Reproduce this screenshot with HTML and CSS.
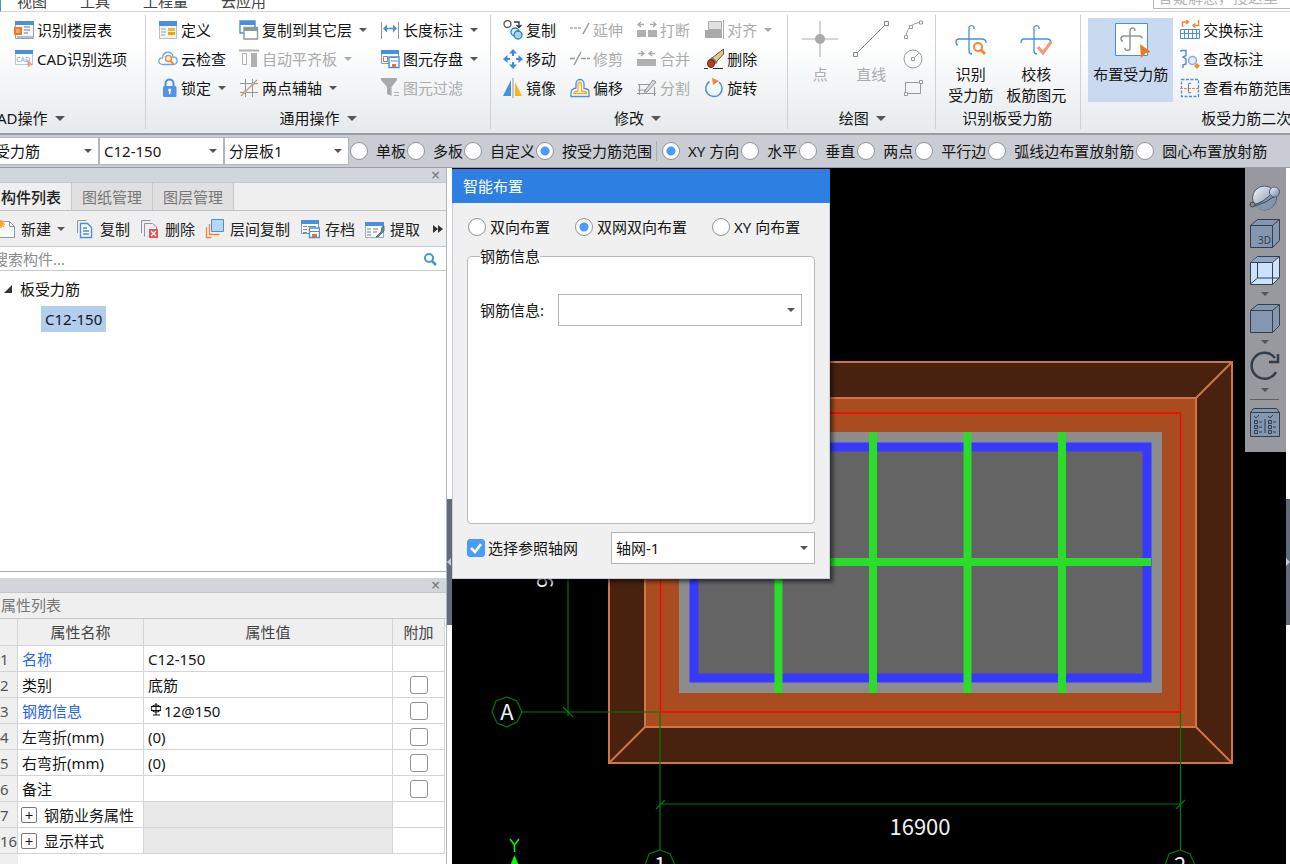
FILE: index.html
```
<!DOCTYPE html>
<html lang="zh-CN">
<head>
<meta charset="utf-8">
<title>板受力筋</title>
<link rel="stylesheet" href="styles.css">
</head>
<body>
<svg class="sprite" aria-hidden="true">
  <defs>
    <linearGradient id="ball" x1="0" y1="0" x2="1" y2="1"><stop offset="0" stop-color="#f2f6fa"/><stop offset="1" stop-color="#6f84a0"/></linearGradient>
  </defs>
  <symbol id="floor-table" viewBox="0 0 20 20"><path d="M1.500 1.500h18v17h-18z" fill="#f4f6f8" stroke="#9aa3ab"/><path d="M1 1h19v4H1z" fill="#4a8fdc"/><path d="M3 17h16" stroke="#4a8fdc"/><path d="M0 7h8v8H0z" fill="#f07a22"/><path d="M2 9h4v4H2z" fill="#f7a56a"/><path d="M10 7h6M10 10h6M10 13h4" stroke="#777"/></symbol>
  <symbol id="cad-options" viewBox="0 0 20 20"><path d="M1.500 1.500h17v14h-17z" fill="#fff" stroke="#b9c9dc"/><path d="M1 1h18v4H1z" fill="#4a8fdc"/><text x="2" y="13" font-size="7" fill="#6fa6e2">CAD</text><path d="M13 10l6 6-3 .5-2 2z" fill="#f59a78"/></symbol>
  <symbol id="define" viewBox="0 0 20 20"><path d="M1.500 1.500h17v17h-17z" fill="#f1f3f5" stroke="#b9bec4"/><path d="M1 1h18v5H1z" fill="#4a8fdc"/><path d="M3 9h5M3 12h5M3 15h4" stroke="#9aa3ab"/><path d="M10 8h7v3h-7z" fill="#f7b733"/><path d="M10 12h7v3h-7z" fill="#f5a300"/></symbol>
  <symbol id="cloud-check" viewBox="0 0 20 20"><path d="M5 15.500C-1 15 0 8.500 4.500 9 5 1.500 14 1.500 15 8c5.500 0 5.500 7.500 0 7.500z" fill="#fff" stroke="#6aa5e8" stroke-width="1.300"/><circle cx="10.500" cy="9.500" r="3" fill="#fff" stroke="#f0873c" stroke-width="1.500"/><path d="M12.500 12l3 3" stroke="#f0873c" stroke-width="2"/></symbol>
  <symbol id="lock" viewBox="0 0 20 20"><path d="M7.500 9V5.500a4 4 0 0 1 8 0V9" fill="none" stroke="#4a8fdc" stroke-width="2"/><rect x="5" y="8" width="13.500" height="11" rx="1.500" fill="#5294e2"/><path d="M11.700 16v-4" stroke="#fff" stroke-width="1.600"/><circle cx="11.700" cy="12" r="1.500" fill="#fff"/></symbol>
  <symbol id="copy-floor" viewBox="0 0 20 20"><path d="M1 1h15v12H1z" fill="#fff" stroke="#4a8fdc" stroke-width="1.400"/><path d="M1 1h15v4H1z" fill="#4a8fdc"/><path d="M5 7.500h13.500V19H5z" fill="#fff" stroke="#8e979e" stroke-width="1.400"/><path d="M5 7h14v4H5z" fill="#8e979e"/></symbol>
  <symbol id="align-slab" viewBox="0 0 20 20"><path d="M0 1.500h20" stroke="#b0b0b0" stroke-width="2"/><path d="M3.500 4.500h4v11h-4z" fill="none" stroke="#b0b0b0"/><path d="M12 4h6v14h-6z" fill="#b0b0b0"/></symbol>
  <symbol id="aux-axis" viewBox="0 0 20 20"><path d="M6.500 1v18M13.500 1v18M1 5.500h18M1 14.500h18" stroke="#8e979e"/><path d="M2 18L18 2" stroke="#f0873c" stroke-width="1.200"/><circle cx="14" cy="6" r="1.200" fill="#fff" stroke="#8e979e"/><circle cx="6" cy="14" r="1.200" fill="#fff" stroke="#8e979e"/></symbol>
  <symbol id="length" viewBox="0 0 20 20"><path d="M1.500 2v17M18.500 2v17" stroke="#8e979e"/><path d="M4 8.500h12" stroke="#4a8fdc" stroke-width="1.500"/><path d="M3 8.500l4-4v8zM17 8.500l-4-4v8z" fill="#4a8fdc"/></symbol>
  <symbol id="store" viewBox="0 0 20 20"><path d="M1.500 1.500h17v13h-17z" fill="#fff" stroke="#8e979e"/><path d="M1 1h18v4H1z" fill="#4a8fdc"/><path d="M3.500 7.500h4v5h-4z" fill="none" stroke="#888"/><path d="M9 8h10v10.500H9z" fill="#fff" stroke="#4a8fdc" stroke-width="1.400"/><path d="M11 8.500h6M11 12h7" stroke="#4a8fdc" stroke-width="1.200"/><path d="M12 15h4v3h-4z" fill="#f0712c"/></symbol>
  <symbol id="archive" viewBox="0 0 20 20"><path d="M1.500 1.500h17v13h-17z" fill="#fff" stroke="#8e979e"/><path d="M1 1h18v4H1z" fill="#4a8fdc"/><path d="M3 7.500h4M8 7.500h8M3 10.500h4M3 13.500h4" stroke="#888"/><path d="M9.500 9h10v9.500h-10z" fill="#fff" stroke="#4a8fdc" stroke-width="1.400"/><path d="M10 12.500h9" stroke="#4a8fdc"/><path d="M12 15h5v3h-5z" fill="#f0712c"/></symbol>
  <symbol id="filter" viewBox="0 0 20 20"><path d="M1 0h16v2l-5.500 7v9L7 16V9L1 2z" fill="#a9a9a9"/><path d="M14 14.500h5M14 17.500h5" stroke="#b0b0b0"/></symbol>
  <symbol id="copy-round" viewBox="0 0 20 20"><circle cx="4.500" cy="4" r="3.500" fill="#fff" stroke="#555" stroke-width="1.300"/><path d="M11 2h5v5M13.500 5l2.500 2.500L18.500 5" fill="none" stroke="#333" stroke-width="1.300"/><circle cx="12" cy="12" r="4" fill="#d4e7f8" stroke="#2f80b8" stroke-width="1.300"/><circle cx="15" cy="15" r="4" fill="#a8d0f0" stroke="#2f80b8" stroke-width="1.300"/></symbol>
  <symbol id="move" viewBox="0 0 20 20"><path d="M10 0l4 4.500H6zM10 20l4-4.500H6zM0 10l4.500-4v8zM20 10l-4.500-4v8z" fill="#4189dd"/><path d="M10 4v3M10 13v3M4 10h3M13 10h3" stroke="#4189dd" stroke-width="2"/></symbol>
  <symbol id="mirror" viewBox="0 0 20 20"><path d="M8 2v16H0z" fill="#4a8fdc"/><path d="M12 4v14h7z" fill="#fdb515"/><path d="M10 0v20" stroke="#8e979e"/></symbol>
  <symbol id="extend" viewBox="0 0 20 20"><path d="M0 8h11" stroke="#aaa" stroke-width="1.300" stroke-dasharray="3 1"/><path d="M13 14l6-11" stroke="#999" stroke-width="1.500"/></symbol>
  <symbol id="trim" viewBox="0 0 20 20"><path d="M0 9.500h6M11 9.500h9" stroke="#999" stroke-width="1.300" stroke-dasharray="5 1"/><path d="M4 16L11 3" stroke="#999" stroke-width="1.500"/></symbol>
  <symbol id="offset" viewBox="0 0 20 20"><path d="M1 18.500h18v-4q0-4-5-4V6c0-6-8-6-8 0v4q-5 1-5 5z" fill="#fff" stroke="#4a8fdc" stroke-width="1.300"/><path d="M4 15.500h12.500q0-2.500-5-2.500V6.500c0-3-3.500-3-3.500 0V13q-4 0-4 2.500z" fill="#fff" stroke="#f6a821" stroke-width="1.300"/></symbol>
  <symbol id="break" viewBox="0 0 20 20"><path d="M0 10h9v7H0zM11 10h9v7h-9z" fill="#b0b0b0"/><path d="M1 4.500h6M4 2L1 4.500 4 7M13 4.500h6M16 2l3 2.500L16 7" fill="none" stroke="#aaa" stroke-width="1.300"/></symbol>
  <symbol id="merge" viewBox="0 0 20 20"><path d="M0 10h19v7H0z" fill="#b0b0b0"/><path d="M1 4.500h6M4 2l3 2.500L4 7M12 4.500h6M15 2l-3 2.500L15 7" fill="none" stroke="#aaa" stroke-width="1.300"/></symbol>
  <symbol id="split" viewBox="0 0 20 20"><path d="M1 6.500h12M2.500 6v11M0 15.500h19M17.500 9v9M1 12h9" fill="none" stroke="#999" stroke-width="1.200"/><path d="M7 14l9-12 3 2-9 10z" fill="#ddd" stroke="#888"/></symbol>
  <symbol id="align" viewBox="0 0 20 20"><path d="M4.500 1.500h13v8h-13z" fill="#e1e1e1" stroke="#aaa"/><path d="M1 10h17v8H1z" fill="#aaa"/><path d="M19.500 0v19" stroke="#aaa"/></symbol>
  <symbol id="erase" viewBox="0 0 20 20"><path d="M19.500 0v5l-9 10-5-4z" fill="#e5c58a" stroke="#6a5638"/><path d="M7 9l6 5" stroke="#777" stroke-width="2.500"/><ellipse cx="7" cy="14.500" rx="3.500" ry="4" fill="#c73b1a" stroke="#4b2a1e"/><path d="M0 19.500h4M9 19.500h10" stroke="#333"/></symbol>
  <symbol id="rotate" viewBox="0 0 20 20"><path d="M5.500 3.500a8.200 8.200 0 1 0 9.500.5" fill="none" stroke="#4a8fdc" stroke-width="1.500"/><path d="M8 0l7 3-6 4z" fill="#f0873c"/></symbol>
  <symbol id="arc" viewBox="0 0 20 20"><path d="M3 16C4 8 10 3 17 2.500" fill="none" stroke="#999"/><path d="M1.500 15.500h3v3h-3zM6.500 5.500h3v3h-3zM16.500 1h3v3h-3z" fill="#fff" stroke="#999"/></symbol>
  <symbol id="circle" viewBox="0 0 20 20"><circle cx="10" cy="10" r="9" fill="none" stroke="#999"/><path d="M11 9l5-5" stroke="#999"/><path d="M8.500 8.500h3v3h-3z" fill="#fff" stroke="#999"/></symbol>
  <symbol id="rect" viewBox="0 0 20 20"><path d="M2.500 4.500h15v11h-15z" fill="none" stroke="#999"/><path d="M1.500 14.500h3v3h-3zM16.500 2.500h3v3h-3z" fill="#fff" stroke="#999"/></symbol>
  <symbol id="point" viewBox="0 0 38 38"><path d="M19 1v36M1 19h36" stroke="#aaa"/><circle cx="19" cy="19" r="5" fill="#aaa"/></symbol>
  <symbol id="line" viewBox="0 0 38 38"><path d="M4 34L34 4" stroke="#888"/><path d="M1.500 32.500h4v4h-4zM32.500 1.500h4v4h-4z" fill="#fff" stroke="#888"/></symbol>
  <symbol id="rebar-find" viewBox="0 0 38 38"><path d="M22 9V7a3 3 0 0 0-5 0v24a3 3 0 0 0 3 3M6 25q-2 0-2-3t3-3h23q4 0 4 4" fill="none" stroke="#4a8fdc" stroke-width="1.300"/><circle cx="26" cy="27" r="4" fill="#fff" stroke="#f0873c" stroke-width="2"/><path d="M29 30l4 4" stroke="#f0873c" stroke-width="3"/></symbol>
  <symbol id="rebar-check" viewBox="0 0 38 38"><path d="M22 9V7a3 3 0 0 0-5 0v24a3 3 0 0 0 3 3M4 23q0-4 3-4h23q4 0 4 4" fill="none" stroke="#4a8fdc" stroke-width="1.300"/><path d="M21 27l5 6 8-11" fill="none" stroke="#f59a78" stroke-width="3"/></symbol>
  <symbol id="rebar-place" viewBox="0 0 38 38"><path d="M3.500 3.500h32v32h-32z" fill="#fff" stroke="#4a8fdc"/><path d="M23 11q0-3-2.500-3T18 11v17q0 2.500-2.500 2.500T13 28M11 21q-2 0-2-2.500T12 16h15q3 0 3 2.500" fill="none" stroke="#8e979e" stroke-width="1.500"/><path d="M28 24l11 8-5 1-5 5z" fill="#f07a22"/></symbol>
  <symbol id="swap" viewBox="0 0 20 20"><path d="M.5 9.500h19v9H.5zM0 13.500h20M4.500 10v8M8.500 10v8M12.500 10v8M16.500 10v8" fill="none" stroke="#4a8fdc"/><path d="M2.500 7V2h5M6 0l2.500 2L6 4M18.500 0v5.500h-5M15.500 3.500l-2.500 2 2.500 2" fill="none" stroke="#f0873c" stroke-width="1.500"/></symbol>
  <symbol id="review" viewBox="0 0 20 20"><path d="M1 1.500h5v5L3 8l3 2v5l-3 1v3M1 1v2" fill="none" stroke="#4a8fdc" stroke-width="1.400"/><circle cx="12.500" cy="11.500" r="4" fill="#e3eefb" stroke="#8aa8d8" stroke-width="1.500"/><path d="M17 14l3 3-3 3-3-3z" fill="#f2912a"/></symbol>
  <symbol id="range" viewBox="0 0 20 20"><path d="M1.500 1.500h17v17h-17z" fill="none" stroke="#4a8fdc" stroke-width="1.300" stroke-dasharray="3 1.500"/><path d="M0 10.500h20" stroke="#f0873c" stroke-dasharray="3 1"/><path d="M11 5.500q-2.500-1.500-2.500 1v7q0 2.500 2.500 1" fill="none" stroke="#777"/></symbol>
  <symbol id="new" viewBox="0 0 20 20"><path d="M4.500 2.500h10l5 5v11h-15z" fill="#f8f9fa" stroke="#8e979e"/><path d="M14.500 2.500v5h5" fill="none" stroke="#8e979e"/><path d="M6 1v8M2 5h8M3 2l6 6M9 2L3 8" stroke="#f7a82c" stroke-width="1.500"/></symbol>
  <symbol id="copy-doc" viewBox="0 0 20 20"><path d="M2.500 14V1.500h9" fill="none" stroke="#8e979e"/><path d="M5.500 4.500h7l4 4v10h-11z" fill="#fff" stroke="#4a8fdc" stroke-width="1.400"/><path d="M8 9h4M8 12h6M8 15h6" stroke="#4a8fdc" stroke-width="1.400"/></symbol>
  <symbol id="delete-doc" viewBox="0 0 20 20"><path d="M1.500 14V1.500h9M4.500 17.500v-13h8l4 3v3" fill="none" stroke="#8e979e"/><path d="M9 10h9v9H9z" fill="#e25555"/><path d="M11 12l5 5M16 12l-5 5" stroke="#fff" stroke-width="1.300"/></symbol>
  <symbol id="layers" viewBox="0 0 20 20"><path d="M1.500 8v10.500h5M4.500 5v10.500h10M1.500 18.500h3" fill="none" stroke="#f0873c" stroke-width="1.300"/><path d="M6.500.5h12v12h-12z" fill="#b5d6ff" stroke="#4a8fdc"/></symbol>
  <symbol id="extract" viewBox="0 0 20 20"><path d="M.5 3.500h18v15H.5z" fill="#fff" stroke="#7fb0ea"/><path d="M0 3h19v4H0z" fill="#4a8fdc"/><path d="M2 10h4M8 10h5M2 13h4M8 13h4M2 16h4" stroke="#777"/><path d="M11 18l5-5 1-5 2-1v5l-6 6z" fill="#36a5b5" stroke="#666"/></symbol>
  <symbol id="search" viewBox="0 0 20 20"><circle cx="9" cy="9" r="4" fill="none" stroke="#3f9ac9" stroke-width="2"/><path d="M12 12l4 4" stroke="#3f9ac9" stroke-width="2.500"/></symbol>
  <symbol id="orbit" viewBox="0 0 32 30"><circle cx="15.500" cy="17" r="12" fill="url(#ball)" stroke="#4c5c70"/><path d="M4 23q11-1 19-10l4 4q-2 12-12 12-7 0-11-6z" fill="#8295ae"/><path d="M3 24q12-2 21-13M6 25q11-3 20-10" fill="none" stroke="#3c4654"/><circle cx="25.500" cy="11" r="5" fill="url(#ball)" stroke="#4c5c70"/><circle cx="3.500" cy="23.500" r="2.500" fill="#888" stroke="#444"/></symbol>
  <symbol id="cube" viewBox="0 0 32 30"><path d="M1.500 7.500l7-6h22v21l-7 7h-22z" fill="#8497b1" stroke="#343d4a"/><path d="M1.500 7.500h22v22M23.500 7.500l7-6" fill="none" stroke="#343d4a"/></symbol>
  <symbol id="cube-3d" viewBox="0 0 32 30"><use href="#cube"/><text x="9" y="26" font-size="10" fill="#343d4a">3D</text></symbol>
  <symbol id="cube-wire" viewBox="0 0 32 30"><path d="M1.500 7.500l7-6h22v21l-7 7h-22z" fill="#cbe2fc" stroke="#343d4a"/><path d="M2 7l7-5h21l-7 5z" fill="#8fa7c2"/><path d="M1.500 7.500h22v22M23.500 7.500l7-6M8.500 8v15h22M8.500 23l-7 6" fill="none" stroke="#343d4a"/></symbol>
  <symbol id="redo" viewBox="0 0 32 30"><path d="M26 7A13 13 0 1 0 27 21" fill="none" stroke="#343d4a" stroke-width="2.500"/><path d="M29 3v8h-9" fill="none" stroke="#343d4a" stroke-width="2.500"/></symbol>
  <symbol id="options" viewBox="0 0 32 30"><path d="M1.500 5.500l3-4h23l3 4v24h-29z" fill="#8497b1" stroke="#343d4a"/><path d="M1 5.500h30M16 12v14" stroke="#343d4a"/><path d="M5 9l2 2 3-3M19 9l2 2 3-3M5.500 13.500h3v3h-3zM5.500 18.500h3v3h-3zM5.500 23.500h3v3h-3zM19.500 13.500h3v3h-3zM19.500 18.500h3v3h-3zM19.500 23.500h3v3h-3zM10 15h3M10 20h3M10 25h3M24 15h3M24 20h3M24 25h3" fill="none" stroke="#343d4a"/></symbol>
</svg>

<div class="app">
  <nav class="menubar">
    <a href="#" class="menu-link">视图</a><a href="#" class="menu-link">工具</a><a href="#" class="menu-link">工程量</a><a href="#" class="menu-link">云应用</a>
    <input class="help-search" type="text" placeholder="答疑解惑，搜这里" aria-label="答疑解惑">
  </nav>

  <header class="ribbon">
    <section class="group group-cad">
      <div class="columns">
        <div class="col">
          <button class="tool"><svg class="icon"><use href="#floor-table"/></svg>识别楼层表</button>
          <button class="tool"><svg class="icon"><use href="#cad-options"/></svg>CAD识别选项</button>
        </div>
      </div>
      <button class="group-label">AD操作<i class="caret caret-lg"></i></button>
    </section>
    <section class="group">
      <div class="columns">
        <div class="col">
          <button class="tool"><svg class="icon"><use href="#define"/></svg>定义</button>
          <button class="tool"><svg class="icon"><use href="#cloud-check"/></svg>云检查</button>
          <button class="tool"><svg class="icon"><use href="#lock"/></svg>锁定<i class="caret"></i></button>
        </div>
        <div class="col">
          <button class="tool"><svg class="icon"><use href="#copy-floor"/></svg>复制到其它层<i class="caret"></i></button>
          <button class="tool" disabled><svg class="icon"><use href="#align-slab"/></svg>自动平齐板<i class="caret"></i></button>
          <button class="tool"><svg class="icon"><use href="#aux-axis"/></svg>两点辅轴<i class="caret"></i></button>
        </div>
        <div class="col">
          <button class="tool"><svg class="icon"><use href="#length"/></svg>长度标注<i class="caret"></i></button>
          <button class="tool"><svg class="icon"><use href="#store"/></svg>图元存盘<i class="caret"></i></button>
          <button class="tool" disabled><svg class="icon"><use href="#filter"/></svg>图元过滤</button>
        </div>
      </div>
      <button class="group-label">通用操作<i class="caret caret-lg"></i></button>
    </section>
    <section class="group group-modify">
      <div class="columns">
        <div class="col">
          <button class="tool"><svg class="icon"><use href="#copy-round"/></svg>复制</button>
          <button class="tool"><svg class="icon"><use href="#move"/></svg>移动</button>
          <button class="tool"><svg class="icon"><use href="#mirror"/></svg>镜像</button>
        </div>
        <div class="col">
          <button class="tool" disabled><svg class="icon"><use href="#extend"/></svg>延伸</button>
          <button class="tool" disabled><svg class="icon"><use href="#trim"/></svg>修剪</button>
          <button class="tool"><svg class="icon"><use href="#offset"/></svg>偏移</button>
        </div>
        <div class="col">
          <button class="tool" disabled><svg class="icon"><use href="#break"/></svg>打断</button>
          <button class="tool" disabled><svg class="icon"><use href="#merge"/></svg>合并</button>
          <button class="tool" disabled><svg class="icon"><use href="#split"/></svg>分割</button>
        </div>
        <div class="col">
          <button class="tool" disabled><svg class="icon"><use href="#align"/></svg>对齐<i class="caret"></i></button>
          <button class="tool"><svg class="icon"><use href="#erase"/></svg>删除</button>
          <button class="tool"><svg class="icon"><use href="#rotate"/></svg>旋转</button>
        </div>
      </div>
      <button class="group-label">修改<i class="caret caret-lg"></i></button>
    </section>
    <section class="group group-draw">
      <div class="columns">
        <button class="big" disabled><svg class="icon-big"><use href="#point"/></svg>点</button>
        <button class="big" disabled><svg class="icon-big"><use href="#line"/></svg>直线</button>
        <div class="col">
          <button class="tool" disabled aria-label="圆弧"><svg class="icon"><use href="#arc"/></svg></button>
          <button class="tool" disabled aria-label="圆"><svg class="icon"><use href="#circle"/></svg></button>
          <button class="tool" disabled aria-label="矩形"><svg class="icon"><use href="#rect"/></svg></button>
        </div>
      </div>
      <button class="group-label">绘图<i class="caret caret-lg"></i></button>
    </section>
    <section class="group group-detect">
      <div class="columns">
        <button class="big"><svg class="icon-big"><use href="#rebar-find"/></svg>识别<br>受力筋</button>
        <button class="big"><svg class="icon-big"><use href="#rebar-check"/></svg>校核<br>板筋图元</button>
      </div>
      <div class="group-label">识别板受力筋</div>
    </section>
    <section class="group group-edit">
      <div class="columns">
        <button class="big big-active"><svg class="icon-big"><use href="#rebar-place"/></svg>布置受力筋</button>
        <div class="col">
          <button class="tool"><svg class="icon"><use href="#swap"/></svg>交换标注</button>
          <button class="tool"><svg class="icon"><use href="#review"/></svg>查改标注</button>
          <button class="tool"><svg class="icon"><use href="#range"/></svg>查看布筋范围</button>
        </div>
      </div>
      <div class="group-label">板受力筋二次</div>
    </section>
  </header>

  <div class="optionbar">
    <span class="select select-type"><select aria-label="构件类型"><option>受力筋</option></select></span>
    <span class="select"><select aria-label="构件"><option>C12-150</option></select></span>
    <span class="select"><select aria-label="分层"><option>分层板1</option></select></span>
    <div class="modes">
      <label><input type="radio" name="range">单板</label>
      <label><input type="radio" name="range">多板</label>
      <label><input type="radio" name="range">自定义</label>
      <label><input type="radio" name="range" checked>按受力筋范围</label>
    </div>
    <div class="modes modes-next">
      <label><input type="radio" name="dir" checked>XY 方向</label>
      <label><input type="radio" name="dir">水平</label>
      <label><input type="radio" name="dir">垂直</label>
      <label><input type="radio" name="dir">两点</label>
      <label><input type="radio" name="dir">平行边</label>
      <label><input type="radio" name="dir">弧线边布置放射筋</label>
      <label><input type="radio" name="dir">圆心布置放射筋</label>
    </div>
  </div>

  <main class="work">
    <aside class="side">
      <section class="panel panel-list">
        <div class="panel-bar"><button class="close" aria-label="关闭">×</button></div>
        <div class="tabs">
          <button class="tab tab-on">构件列表</button><button class="tab">图纸管理</button><button class="tab">图层管理</button>
        </div>
        <div class="list-tools">
          <button class="create"><svg class="icon"><use href="#new"/></svg>新建<i class="caret"></i></button>
          <button><svg class="icon"><use href="#copy-doc"/></svg>复制</button>
          <button><svg class="icon"><use href="#delete-doc"/></svg>删除</button>
          <button><svg class="icon"><use href="#layers"/></svg>层间复制</button>
          <button><svg class="icon"><use href="#archive"/></svg>存档</button>
          <button><svg class="icon"><use href="#extract"/></svg>提取</button>
          <button class="more" aria-label="更多"><svg viewBox="0 0 10 8"><path d="M0 0l5 4-5 4zM5 0l5 4-5 4z" fill="#333"/></svg></button>
        </div>
        <div class="find"><input type="text" placeholder="搜索构件..." aria-label="搜索构件"><svg class="icon"><use href="#search"/></svg></div>
        <ul class="tree">
          <li><span class="node"><svg class="twist" viewBox="0 0 8 8"><path d="M8 0v8H0z" fill="#333"/></svg>板受力筋</span>
            <ul><li><span class="leaf">C12-150</span></li></ul>
          </li>
        </ul>
      </section>
      <section class="panel panel-props">
        <div class="panel-bar"><button class="close" aria-label="关闭">×</button></div>
        <h2>属性列表</h2>
        <table class="props">
          <thead><tr><th class="num"></th><th class="name">属性名称</th><th>属性值</th><th class="extra">附加</th></tr></thead>
          <tbody>
            <tr><td>1</td><td class="key">名称</td><td>C12-150</td><td></td></tr>
            <tr><td>2</td><td>类别</td><td>底筋</td><td><input type="checkbox" aria-label="类别 附加"></td></tr>
            <tr><td>3</td><td class="key">钢筋信息</td><td><svg class="grade" viewBox="0 0 12 14"><path d="M6 0v12M3 12h7M1 3.500h10M1 7.500h10" fill="none" stroke="#111"/><ellipse cx="6" cy="5.500" rx="4.500" ry="3.500" fill="none" stroke="#111"/></svg>12@150</td><td><input type="checkbox" aria-label="钢筋信息 附加"></td></tr>
            <tr><td>4</td><td>左弯折(mm)</td><td>(0)</td><td><input type="checkbox" aria-label="左弯折 附加"></td></tr>
            <tr><td>5</td><td>右弯折(mm)</td><td>(0)</td><td><input type="checkbox" aria-label="右弯折 附加"></td></tr>
            <tr><td>6</td><td>备注</td><td></td><td><input type="checkbox" aria-label="备注 附加"></td></tr>
            <tr><td>7</td><td><span class="fold"><button class="plus">+</button>钢筋业务属性</span></td><td class="blank"></td><td></td></tr>
            <tr><td>16</td><td><span class="fold"><button class="plus">+</button>显示样式</span></td><td class="blank"></td><td></td></tr>
            <tr class="tail"><td></td><td></td><td></td><td></td></tr>
          </tbody>
        </table>
      </section>
    </aside>
    <div class="splitter"><span class="grip"></span></div>

    <section class="stage">
      <svg class="drawing" viewBox="452 168 834 696" preserveAspectRatio="xMaxYMin meet">
        <g stroke="#d07547" stroke-width="2">
          <path d="M609 362h623v401H609z" fill="#48220f"/>
          <path d="M609 362l36 36M1232 362l-36 36M609 763l36-36M1232 763l-36-36"/>
          <path d="M645 398h551v329H645z" fill="#a94d20"/>
        </g>
        <path d="M660.500 413h520v299h-520z" fill="none" stroke="#f00" stroke-width="1.300"/>
        <path d="M679 432h483v261H679z" fill="#8c8c8c"/>
        <path d="M694 447h453v231H694z" fill="#646464" stroke="#3838ff" stroke-width="9"/>
        <path d="M778.500 432v261M873 432v261M967.500 432v261M1062 432v261M690 562h461" stroke="#2bdc2b" stroke-width="8"/>
        <g fill="none" stroke="#007a00" stroke-width="1.200">
          <path d="M568 500v216M522 712h138M660 712v138M1180.500 712v138M660 804h521M563 707l10 10M656 809l9-9M1176 809l9-9"/>
          <path id="bubble" d="M507 697l10 4 5 11-5 10-10 5-10-4-5-11 4-11z"/>
          <use href="#bubble" x="153" y="153"/><use href="#bubble" x="673" y="153"/>
        </g>
        <g class="dims" fill="#f0f0f0" text-anchor="middle">
          <text x="507" y="720">A</text><text x="660" y="873">1</text><text x="1180" y="873">2</text>
          <text x="920" y="835">16900</text>
          <text transform="translate(553 582) rotate(-90)">9</text>
        </g>
        <path d="M510 839l4.500 6 4.500-6M514.500 845v7" fill="none" stroke="#0f0" stroke-width="1.500"/>
        <path d="M514.500 855l5 12h-10z" fill="#0f0"/>
      </svg>

      <form class="dialog">
        <h1>智能布置</h1>
        <div class="dialog-body">
          <div class="ways">
            <label><input type="radio" name="way">双向布置</label>
            <label><input type="radio" name="way" checked>双网双向布置</label>
            <label><input type="radio" name="way">XY 向布置</label>
          </div>
          <fieldset>
            <legend>钢筋信息</legend>
            <div class="field"><label for="bar">钢筋信息:</label><span class="select"><select id="bar"><option></option></select></span></div>
          </fieldset>
          <div class="axis">
            <label><input type="checkbox" checked>选择参照轴网</label>
            <span class="select"><select aria-label="轴网"><option>轴网-1</option></select></span>
          </div>
        </div>
      </form>

      <div class="viewbar">
        <button aria-label="动态观察"><svg><use href="#orbit"/></svg></button>
        <button aria-label="三维"><svg><use href="#cube-3d"/></svg></button>
        <button aria-label="线框"><svg><use href="#cube-wire"/></svg></button>
        <i class="caret"></i>
        <button aria-label="实体"><svg><use href="#cube"/></svg></button>
        <i class="caret"></i>
        <button aria-label="旋转"><svg><use href="#redo"/></svg></button>
        <i class="caret"></i>
        <hr>
        <button aria-label="显示设置"><svg><use href="#options"/></svg></button>
      </div>
    </section>
    <div class="splitter splitter-end"><span class="grip"></span></div>
  </main>
</div>
</body>
</html>
```
FILE: styles.css
```
* { box-sizing: border-box; }
html, body { height: 100%; margin: 0; }
body, button, input, select {
  font: 15px/20px "Noto Sans", "Noto Sans CJK SC", sans-serif;
  color: #151515;
}
button {
  display: flex;
  align-items: center;
  padding: 0;
  border: 0;
  background: none;
  white-space: nowrap;
}
.sprite { position: absolute; width: 0; height: 0; }
.icon { width: 20px; height: 20px; flex: none; }
.app { display: flex; flex-direction: column; height: 100vh; overflow: hidden; background: #fff; }

.caret {
  flex: none;
  border: 4px solid transparent;
  border-top-color: #555;
  border-bottom: 0;
  margin-left: 7px;
}
.caret-lg { border-width: 5px; border-bottom: 0; }

/* menu */
.menubar {
  display: flex;
  align-items: flex-end;
  height: 12px;
  padding-left: 16px;
  overflow: hidden;
  border-bottom: 1px solid #d5d7da;
  border-left: 1px solid #4a8fdc;
  flex: none;
}
.menu-link { color: #444; text-decoration: none; margin-right: 33px; }
.help-search {
  width: 137px;
  height: 24px;
  margin: 0 0 2px auto;
  padding: 0 4px 1px;
  border: 1px solid #b5b8bd;
  border-right: 0;
  flex: none;
}
::placeholder { color: #8c8c8c; opacity: 1; }
.help-search::placeholder { color: #b5b5b5; }

/* ribbon */
.ribbon {
  display: flex;
  height: 123px;
  padding-top: 3px;
  background: linear-gradient(#fff 25%, #e6eaed);
  border-bottom: 2px solid #979da5;
  flex: none;
}
.group {
  display: flex;
  flex-direction: column;
  justify-content: space-between;
  flex: none;
  padding: 0 12px;
  margin-bottom: 4px;
  border-right: 1px solid #cdd1d5;
}
.columns { display: flex; gap: 13px; }
.col { display: flex; flex-direction: column; }
.tool { gap: 3px; height: 29px; }
.tool .caret { margin-left: 7px; }
button:disabled { color: #ababab; }
button:disabled .caret { border-top-color: #aaa; }
.tool .caret { margin-left: 4px; }
.group-label { display: flex; align-items: center; justify-content: center; height: 22px; white-space: nowrap; }
.group-cad { padding: 0 18px 0 14px; }
.group-cad .group-label { justify-content: flex-start; margin-left: -17px; }
.group-modify { padding-right: 15px; }
.group-modify .columns { gap: 14px; }
.group-detect { padding-right: 14px; }
.big {
  flex-direction: column;
  height: 88px;
  padding-top: 5px;
  line-height: 21px;
}
.icon-big { width: 38px; height: 38px; margin-bottom: 6px; flex: none; overflow: visible; }
.big:disabled { width: 38px; }
.group-draw { padding: 0 12px 0 13px; }
.big-active { height: 84px; margin-top: 3px; padding: 2px 5px 0; background: #c9daf0; }
.group-edit { flex: 1 0 auto; padding: 0 0 0 7px; border: 0; }
.group-edit .columns { gap: 7px; }
.group-edit .group-label { justify-content: flex-start; margin-left: 113px; }

/* inputs */
.select { position: relative; display: flex; }
.select::after {
  content: "";
  position: absolute;
  right: 7px;
  top: calc(50% - 2px);
  border: 4px solid transparent;
  border-top-color: #555;
  border-bottom: 0;
  pointer-events: none;
}
select {
  appearance: none;
  width: 100%;
  padding: 0 4px;
  border: 1px solid #b4b6ba;
  border-radius: 0;
  background: #fff;
}
input[type="radio"], input[type="checkbox"] {
  appearance: none;
  flex: none;
  width: 18px;
  height: 18px;
  margin: 0;
  border: 1px solid #8f9296;
  background: #fff;
}
input[type="radio"] { border-radius: 50%; }
input[type="radio"]:checked { background: radial-gradient(circle, #4a9cfb 4px, #fff 5px); }
input[type="checkbox"] { border-radius: 3px; }
label { display: flex; align-items: center; white-space: nowrap; }

.optionbar {
  display: flex;
  align-items: center;
  height: 33px;
  background: #c9ccd2;
  border-bottom: 1px solid #979da5;
  flex: none;
  overflow: hidden;
}
.optionbar .select { width: 125px; flex: none; }
.optionbar .select-type { width: 109px; margin-left: -10px; }
.optionbar select { height: 28px; }
.modes { display: flex; gap: 1px; margin-left: 1px; }
.modes label { gap: 8px; }
.modes-next { gap: 2px; margin-left: 4px; padding-left: 5px; border-left: 1px solid #a9adb3; }

/* side panels */
.work { display: flex; flex: 1; min-height: 0; }
.side { display: flex; flex-direction: column; width: 447px; flex: none; border-right: 1px solid #b3b6bb; }
.panel { display: flex; flex-direction: column; }
.panel-list { flex: 0 0 404px; border-bottom: 1px solid #a9acb0; margin-bottom: 6px; }
.panel-props { flex: 1; min-height: 0; overflow: hidden; }
.panel-bar { display: flex; justify-content: flex-end; height: 15px; padding-right: 4px; background: #d2d5db; border-bottom: 1px solid #c3c6cb; flex: none; }
.close { color: #777; line-height: 14px; font-size: 16px; width: 13px; justify-content: center; }
.tabs { display: flex; height: 28px; background: #efefef; border-bottom: 1px solid #bfc3c8; flex: none; }
.tab { padding: 0 10px; color: #777; background: #e0e0e0; border-right: 1px solid #c6c9ce; }
.tab-on { padding-left: 1px; color: #222; background: #efefef; font-weight: 500; }
.list-tools { display: flex; gap: 10px; height: 36px; margin-left: -5px; background: #efefef; border-bottom: 1px solid #c6c9ce; flex: none; }
.list-tools button { gap: 5px; color: #222; }
.list-tools .create { gap: 6px; }
.list-tools .caret { margin-left: 0; }
.more svg { width: 10px; height: 8px; margin-left: 3px; }
.find { display: flex; align-items: center; height: 24px; padding-right: 6px; border-bottom: 1px solid #c6c9ce; flex: none; }
.find input { flex: 1; margin-left: -7px; padding: 0; border: 0; height: 20px; }
.tree, .tree ul { margin: 0; padding: 0; list-style: none; }
.tree { padding: 3px 4px; }
.node { display: flex; align-items: center; gap: 8px; height: 30px; }
.twist { width: 8px; height: 8px; }
.leaf { display: inline-block; margin: 2px 0 0 37px; padding: 3px 4px; background: #b3cdee; }
h2 { margin: 0; padding: 2px 1px 3px; font-size: 15px; line-height: 20px; font-weight: 400; color: #777; background: #efefef; border-bottom: 1px solid #c6c9ce; }
.props { width: 445px; table-layout: fixed; border-collapse: separate; border-spacing: 0; }
.props th, .props td { height: 26px; padding: 0 4px; border: solid #d3d4d6; border-width: 0 1px 1px 0; white-space: nowrap; text-align: left; }
.props th { height: 27px; text-align: center; font-weight: 400; color: #444; background: #efefef; }
.props td:first-child { padding: 0; background: #efefef; color: #555; }
.props td:last-child { padding: 0; }
.props .num { width: 18px; }
.props .name { width: 126px; }
.props .extra { width: 52px; }
.props .key { color: #2563f0; }
.props .blank { background: #e9e9e9; }
.props .tail td { border: 0; }
.props input { display: block; margin: 0 auto; }
.grade { width: 12px; height: 14px; margin: 0 2px; }
.fold { display: flex; align-items: center; gap: 7px; margin-left: -1px; }
.plus { width: 16px; height: 16px; justify-content: center; border: 1px solid #777; border-radius: 2px; line-height: 14px; }

.splitter { display: flex; flex-direction: column; width: 5px; padding-top: 331px; background: #fff; flex: none; }
.splitter-end { width: 4px; }
.grip { height: 126px; background: #626c79; }
.grip::before { content: ""; display: block; width: 0; margin-top: 59px; border: 4px solid transparent; border-right-color: #c5cad2; border-left: 0; }
.splitter-end .grip::before { border: 4px solid transparent; border-left-color: #c5cad2; border-right: 0; }

/* drawing */
.stage { position: relative; flex: 1; min-width: 0; background: #000; overflow: hidden; }
.drawing { display: block; width: 100%; height: 100%; }
.dims { font: 22px "Noto Sans CJK SC", sans-serif; }

.dialog {
  position: absolute;
  left: 0;
  top: 1px;
  width: 378px;
  background: #f0f0f0;
  border: 1px solid #c7cedb;
  border-top: 0;
  box-shadow: 3px 3px 4px #0008;
}
h1 { margin: 0 -1px; padding: 7px 11px; font-size: 15px; line-height: 20px; font-weight: 400; color: #fff; background: #2d7fe1; }
.dialog-body { padding: 13px 14px 14px; }
.ways { display: flex; gap: 25px; margin: 1px 1px 9px; }
.ways label { gap: 4px; }
fieldset { height: 278px; margin: 0; padding: 28px 12px; border: 1px solid #b9b9b9; border-radius: 4px; background: #fff; }
legend { padding: 0; }
.field { display: flex; align-items: center; gap: 14px; }
.field .select { flex: 1; }
.dialog select { height: 32px; }
.axis { display: flex; justify-content: space-between; margin-top: 8px; }
.axis label { gap: 3px; }
.axis .select { width: 204px; }
input[type="checkbox"]:checked {
  border-color: #4a9cfb;
  background: url("data:image/svg+xml,%3Csvg xmlns='http://www.w3.org/2000/svg' viewBox='0 0 16 16'%3E%3Cpath d='M3 8l4 4 6-8' fill='none' stroke='%23fff' stroke-width='2.500'/%3E%3C/svg%3E") #4a9cfb;
}

.viewbar {
  position: absolute;
  top: 0;
  right: 0;
  display: flex;
  flex-direction: column;
  align-items: center;
  gap: 7px;
  width: 41px;
  padding: 13px 2px 15px 0;
  background: #97999e;
}
.viewbar svg { display: block; width: 32px; height: 30px; }
.viewbar .caret { margin: 0; }
.viewbar hr { width: 29px; margin: 0; border: 0; border-top: 1px solid #5c6068; }
```
